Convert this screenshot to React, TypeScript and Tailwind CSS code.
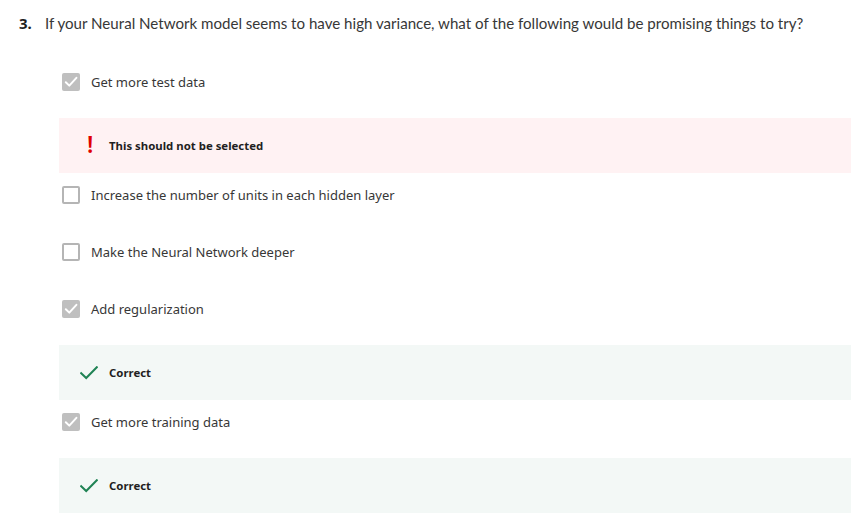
type Feedback = { kind: "wrong" | "correct"; text: string };

type Option = {
  label: string;
  checked: boolean;
  feedback?: Feedback;
};

const options: Option[] = [
  {
    label: "Get more test data",
    checked: true,
    feedback: { kind: "wrong", text: "This should not be selected" }
  },
  { label: "Increase the number of units in each hidden layer", checked: false },
  { label: "Make the Neural Network deeper", checked: false },
  {
    label: "Add regularization",
    checked: true,
    feedback: { kind: "correct", text: "Correct" }
  },
  {
    label: "Get more training data",
    checked: true,
    feedback: { kind: "correct", text: "Correct" }
  }
];

function Checkbox({ checked }: { checked: boolean }) {
  if (checked) {
    return (
      <span className="flex h-[18px] w-[18px] items-center justify-center rounded-[2px] bg-[#bfbfbf]">
        <svg width="16" height="16" viewBox="0 0 16 16" fill="none">
          <path
            d="M2.8 8.2 L6.3 11.6 L13.4 3.8"
            stroke="#ffffff"
            strokeWidth="2"
            strokeLinecap="round"
            strokeLinejoin="round"
          />
        </svg>
      </span>
    );
  }
  return (
    <span className="block h-[18px] w-[18px] rounded-[2px] border-2 border-[#b5b5b5] bg-white" />
  );
}

function FeedbackBox({ feedback }: { feedback: Feedback }) {
  const wrong = feedback.kind === "wrong";
  return (
    <div
      className={`mt-[18px] mb-[4px] flex h-[55px] items-center ${
        wrong ? "bg-[#fff2f3] pl-[28px]" : "bg-[#f3f8f6] pl-[21px]"
      }`}
    >
      {wrong ? (
        <span className="mb-[3px] flex w-[22px] justify-start text-[23px] font-semibold leading-none text-[#e00000]">
          !
        </span>
      ) : (
        <svg width="18" height="14" viewBox="0 0 18 14" fill="none" className="mr-[11px]">
          <path
            d="M1.2 7.2 L6.2 12 L16.8 1.2"
            stroke="#1f8354"
            strokeWidth="2"
            strokeLinecap="square"
          />
        </svg>
      )}
      <span className="pt-[1px] text-[11.4px] font-bold text-[#1f1f1f]">{feedback.text}</span>
    </div>
  );
}

export default function App() {
  return (
    <div
      className="min-h-[524px] w-[851px] bg-white text-[#333333]"
      style={{ fontFamily: "'Noto Sans', 'Open Sans', sans-serif" }}
    >
      <div className="pt-[12px] pl-[19px]">
        <div className="flex h-[22px] items-center whitespace-nowrap">
          <span className="w-[26px] text-[15px] font-bold text-[#1f1f1f]">3.</span>
          <span
            className="text-[15.1px] text-[#373737]"
            style={{ fontFamily: "Lato, 'Noto Sans', sans-serif" }}
          >
            If your Neural Network model seems to have high variance, what of the following would be promising things to try?
          </span>
        </div>
      </div>

      <div className="mt-[30px] ml-[59px]">
        {options.map((opt) => (
          <div key={opt.label} className={opt.feedback ? "" : "mb-[21px]"}>
            <div className="flex h-[36px] items-center pl-[3px]">
              <Checkbox checked={opt.checked} />
              <span className="ml-[11px] pt-[2px] text-[13px] text-[#373737]">{opt.label}</span>
            </div>
            {opt.feedback ? <FeedbackBox feedback={opt.feedback} /> : null}
          </div>
        ))}
      </div>
    </div>
  );
}
